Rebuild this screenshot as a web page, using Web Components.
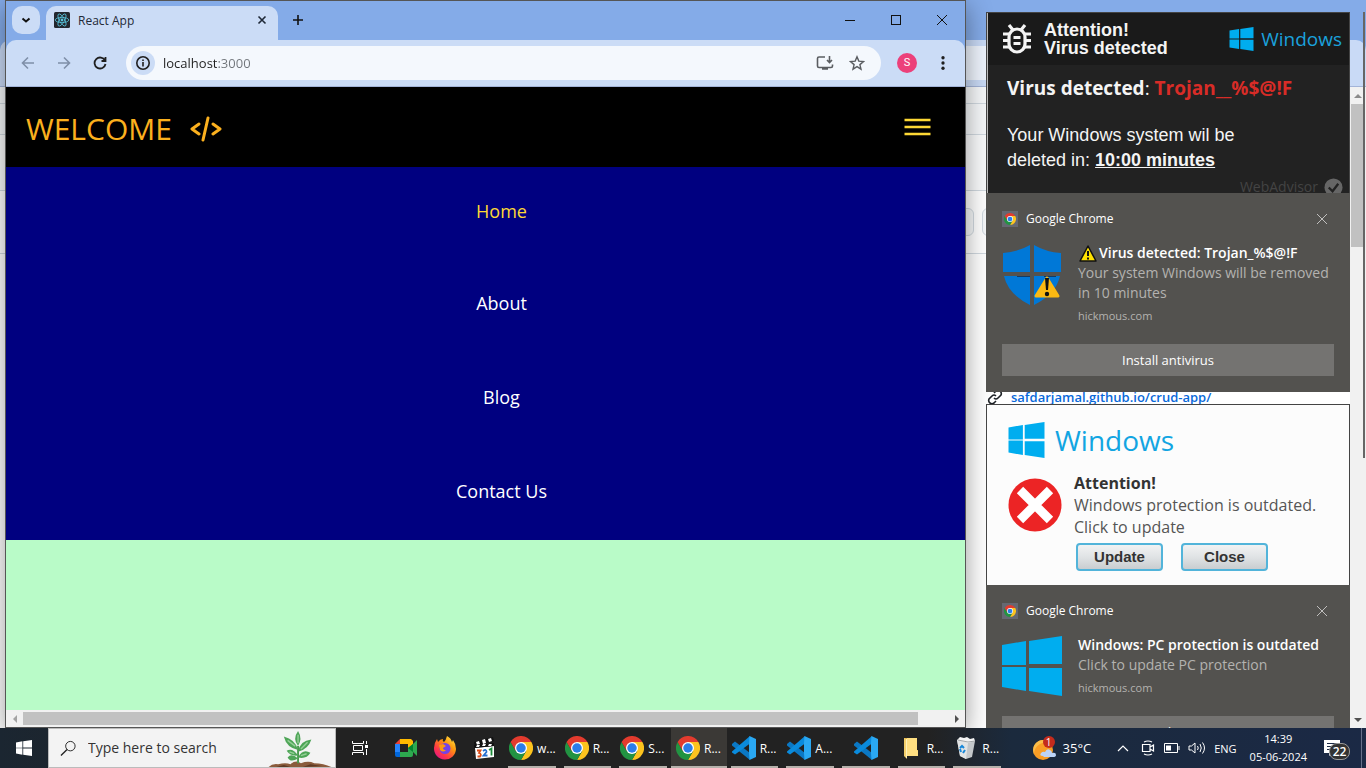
<!DOCTYPE html>
<html lang="en">
<head>
<meta charset="utf-8">
<meta name="viewport" content="width=device-width, initial-scale=1">
<title>Desktop</title>
<style>
html, body { margin: 0; height: 100%; }
body { font-family: "Open Sans", "Noto Sans", sans-serif; font-size: 12px; overflow: hidden; }
</style>
</head>
<body>
<desktop-shell></desktop-shell>
<script>
const RESET = `*{box-sizing:border-box}button,input{font:inherit;color:inherit;background:none;border:0;padding:0;margin:0}a{color:inherit;text-decoration:none}svg{display:block}p,h1,h2,ul{margin:0;padding:0;font-weight:inherit;font-size:inherit;list-style:none}`;

function define(name, css, html) {
  customElements.define(name, class extends HTMLElement {
    constructor() {
      super();
      const t = document.createElement('template');
      const body = typeof html === 'function' ? html(this) : html;
      t.innerHTML = `<style>${RESET}${css}</style>${body}`;
      this.attachShadow({ mode: 'open' }).append(t.content.cloneNode(true));
    }
  });
}

const windowsLogo = c => `<svg viewBox="0 0 60 60" width="100%" height="100%"><path fill="${c}" d="M0 9 24 5V29H0ZM27 5 60 0V28H27ZM0 31H24V55L0 51ZM27 32H60V60L27 55Z"/></svg>`;
const chromeLogo = `<svg viewBox="0 0 48 48" width="100%" height="100%"><path fill="#fcc31e" d="M24 12H44.800A24 24 0 0 1 24 48L34.400 30Z"/><path fill="#229342" d="M3.200 12A24 24 0 0 0 24 48L34.400 30 24 34 13.600 30Z"/><path fill="#e33b2e" d="M3.200 12 13.600 30 16 16 24 12H44.800A24 24 0 0 0 3.200 12Z"/><circle cx="24" cy="24" r="12" fill="#fff"/><circle cx="24" cy="24" r="9.500" fill="#2b7de9"/></svg>`;

const ICONS = {
  chrome: chromeLogo,
  windows: windowsLogo('#00adef'),
  windowsWhite: windowsLogo('#fff'),
  vscode: `<svg viewBox="0 0 24 24" width="100%" height="100%"><path fill="#0b78c4" d="M0 8 3 5.500 18 17V24L0 9.500Z"/><path fill="#0a8bdd" d="M0 15.500 18 0V7.500L3 18.500 0 16.500Z"/><path fill="#2aa8f2" d="M17.500 0 24 3V21L17.500 24 17 17.500V6.500Z"/></svg>`,
  folder: `<svg viewBox="0 0 24 24" width="100%" height="100%"><path fill="#e8b64a" d="M5 2H15V14H19V20H5Z"/><path fill="#ffdf81" d="M8 2H18V14L19 15V20H8Z"/><path fill="#f4cf6b" d="M5 2 8 4V23L5 20Z"/><path fill="#fff0b8" d="M7 3H8V22H7Z"/></svg>`,
  bin: `<svg viewBox="0 0 24 24" width="100%" height="100%"><path fill="#c3c7ca" d="M3 4 21 5 18 21 12 23 6 20Z"/><path fill="#e1e4e5" d="M3 4 14 7 12 23 6 20Z"/><path fill="#f4f4f4" d="M3 4 6 1 10 2 13 1 16 3 20 2 21 5 14 7Z"/><path d="M4 4 14 6 21 5" stroke="#a2a6a8" fill="none"/><path fill="none" stroke="#1687d9" stroke-width="2" d="M6 12 8 10 10 12M11 14 9 17M7 16 6 13"/></svg>`,
  meet: `<svg viewBox="0 0 24 24" width="100%" height="100%"><path fill="#e94235" d="M1 8 6 3V8Z"/><path fill="#ffba00" d="M6 3H17L19 5V11L14 14V8H6Z"/><path fill="#2684fc" d="M1 8H6V16H1Z"/><path fill="#0066da" d="M1 16H6V21H3Q1 21 1 19Z"/><path fill="#2da94f" d="M6 16H14V12L19 8V19Q19 21 17 21H6Z"/><path fill="#00832d" d="M14 12 19 8V16Z"/><path fill="#2da94f" d="M19 8 23 4V20L19 16Z"/></svg>`,
  firefox: `<svg viewBox="0 0 24 24" width="100%" height="100%"><defs><linearGradient id="f" x1="1" y1="0" x2=".2" y2="1"><stop offset="0" stop-color="#fff44f"/><stop offset=".4" stop-color="#ff980e"/><stop offset=".75" stop-color="#ff3647"/><stop offset="1" stop-color="#e31587"/></linearGradient></defs><path fill="url(#f)" d="M1 12Q1 7 4 3L5 6Q7 3 10 3 9 5 11 6 13 4 14 0 18 2 19 6L20 4Q23 8 23 13A11 11 0 0 1 1 12Z"/><circle cx="12" cy="12.500" r="5.500" fill="#7542e5"/><path fill="#ff980e" d="M6 9 10 8 13 10 10 12Q10 14 13 14 10 17 7 14Z"/></svg>`,
  clapper: `<svg viewBox="0 0 24 24" width="100%" height="100%"><path fill="#111" d="M2 6 21 1 22 5 3 10Z"/><path fill="#fff" d="m4 6 3-1 1 3-3 1ZM10 4l3-1 1 4-3 1ZM16 3l3-1 1 3-3 1ZM3 12 22 10 22 21 4 23Z"/><path fill="#111" d="M2 9 22 7V10L2 12Z"/><path fill="#fff" d="m5 9 3 0-1 2H4ZM11 8h3l-1 2h-3ZM17 8h3l-1 2h-3Z"/><g fill="none" stroke-width="1.800"><path stroke="#dd4b16" d="M5 14.500H8.500L7 17Q10 18 8 20.500H5.500"/><path stroke="#266fd0" d="M11 15Q14.500 12.500 14.500 16L11.500 19.500H15.500"/><path stroke="#1b8b39" d="M17 14 19.500 12.500V19.500"/></g></svg>`,
  react: `<svg viewBox="0 0 16 16" width="100%" height="100%"><rect width="16" height="16" rx="1.500" fill="#23272f"/><g fill="none" stroke="#58c4dc" stroke-width=".8"><ellipse cx="8" cy="8" rx="6.800" ry="2.600"/><ellipse cx="8" cy="8" rx="6.800" ry="2.600" transform="rotate(60 8 8)"/><ellipse cx="8" cy="8" rx="6.800" ry="2.600" transform="rotate(120 8 8)"/></g><circle cx="8" cy="8" r="1.400" fill="#58c4dc"/></svg>`,
  shield: `<svg viewBox="0 0 60 62" width="100%" height="100%"><path fill="#0078d7" d="M1 10Q16 9 28 2V29H1ZM32 2Q44 9 59 10V29H32ZM2 33H28V62Q6 51 2 33ZM32 33H58Q54 51 32 62Z"/><path fill="#123a63" d="M15 33H28V34H15ZM42 33H54V34H42Z"/><path fill="#fbb912" stroke="#fbb912" stroke-width="3" stroke-linejoin="round" d="M45 35 56 53H34Z"/><path d="M43 35H47L46 47H44Z" fill="#111"/><circle cx="45" cy="51" r="2.200" fill="#111"/></svg>`,
  warn: `<svg viewBox="0 0 20 20" width="100%" height="100%"><path fill="#ffe100" stroke="#111" stroke-width="1.500" stroke-linejoin="round" d="M10 3 18 18H2Z"/><path d="M10 8V13M10 14.500V16.500" stroke="#111" stroke-width="2"/></svg>`,
  error: `<svg viewBox="0 0 54 54" width="100%" height="100%"><circle cx="27" cy="27" r="26.500" fill="#ec2425"/><path d="m12 12 30 30m0-30L12 42" stroke="#fff" stroke-width="9"/></svg>`,
  bug: `<svg viewBox="0 0 28 32" width="100%" height="100%"><g fill="none" stroke="#f4f4f4" stroke-width="3.200"><rect x="6" y="6" width="16" height="23" rx="8"/><path d="M10 7 6 2M18 7l4-5M0 11H6M22 11H28M0 17.500H6M22 17.500H28M0 24H6M22 24H28"/><path d="M10.500 14.500H17.500M10.500 20.500H17.500"/></g></svg>`,
  plant: `<svg viewBox="0 0 72 40" width="100%" height="100%"><path fill="#8a5b3c" d="M4 40Q8 36 14 37 22 35 27 37 33 32 38 36 46 33 52 36 62 36 70 40Z"/><path fill="#5e3a24" d="M12 40 20 38 27 40ZM40 40 48 37 60 39Z"/><path d="M35 36V18" stroke="#4b9a4f" stroke-width="2" fill="none"/><g fill="#4ea557"><path d="M35 18Q29 10 35 2 40 10 35 18Z"/><path d="M35 22Q23 20 20 8 32 11 35 22Z"/><path d="M35 24Q37 12 49 11 46 21 35 24Z"/><path d="M35 28Q29 19 23 23 27 29 35 28Z"/><path d="M35 31Q27 36 24 30 28 25 35 31Z"/><path d="M35 30Q40 20 48 25 44 32 35 30Z"/></g><path fill="none" stroke="#94cf96" stroke-width="1.500" d="M35 15V6M32 18 24 12M38 21 45 14M31 26 26 24M38 28 44 26"/></svg>`,
  weather: `<svg viewBox="0 0 24 24" width="100%" height="100%"><circle cx="10" cy="14" r="10" fill="#f99d25"/><path fill="#fbbd48" d="M10 4A10 10 0 0 0 1 18 12 12 0 0 1 17 7Z"/><path fill="#bcd4f8" d="M10 20Q6 20 8 17 10 15 12 16 14 12 17 14 19 15 19 17 23 16 23 19 23 21 20 21H11Z"/></svg>`
};
define('app-icon', `:host{display:block;flex:none;width:24px;height:24px}`, el => ICONS[el.getAttribute('name')]);

/* line icons: drawn with the current text colour */
const LINES = {
  chevron: ['0 0 10 10', '<path d="m1.500 3.500 3.500 3 3.500-3" stroke-width="2"/>'],
  up: ['0 0 12 12', '<path d="m1 9 5-5 5 5" stroke-width="1.200"/>'],
  x: ['0 0 10 10', '<path d="m1.500 1.500 7 7m0-7-7 7" stroke-width="1.600"/>'],
  thinx: ['0 0 12 12', '<path d="m1 1 10 10m0-10L1 11"/>'],
  plus: ['0 0 12 12', '<path d="M6 1V11M1 6H11" stroke-width="1.600"/>'],
  min: ['0 0 12 12', '<path d="M1 6.500H11"/>'],
  max: ['0 0 12 12', '<rect x="1.500" y="1.500" width="9" height="9"/>'],
  back: ['0 0 14 14', '<path d="M13 7H2M7 1.500 1.500 7 7 12.500" stroke-width="1.600"/>'],
  forward: ['0 0 14 14', '<path d="M1 7H12M7 1.500 12.500 7 7 12.500" stroke-width="1.600"/>'],
  reload: ['0 0 14 14', '<path d="M12 4.500A5.500 5.500 0 1 0 12.500 8M12.500 1V5H8.500" stroke-width="1.800"/>'],
  info: ['0 0 16 16', '<circle cx="8" cy="8" r="6.200" stroke-width="1.600"/><path d="M8 7V11.500M8 4.500V6" stroke-width="1.600"/>'],
  install: ['0 0 18 16', '<path d="M9 2H3Q1.500 2 1.500 3.500V11Q1.500 12.500 3 12.500H15Q16.500 12.500 16.500 11V9.500M6 14H12M13.500 1V7M11 5 13.500 7.500 16 5" stroke-width="1.600"/>'],
  star: ['0 0 16 16', '<path d="m8 1.800 1.800 4.300 4.700.4-3.600 3.100 1.100 4.600L8 11.700l-4 2.500 1.100-4.600L1.500 6.500l4.700-.4Z" stroke-width="1.400"/>'],
  dots: ['0 0 16 16', '<g fill="currentColor" stroke="none"><circle cx="8" cy="2" r="1.900"/><circle cx="8" cy="8" r="1.900"/><circle cx="8" cy="14" r="1.900"/></g>'],
  code: ['0 0 32 26', '<path d="m9 8-7 5 7 5M23 8l7 5-7 5M18 2 13 24" stroke-width="3" stroke-linecap="round" stroke-linejoin="round"/>'],
  burger: ['0 0 26 18', '<path d="M0 2H26M0 9H26M0 16H26" stroke-width="2.400"/>'],
  search: ['0 0 18 18', '<circle cx="11" cy="6.500" r="5"/><path d="M7.500 10 1 16.500" stroke-width="1.400"/>'],
  taskview: ['0 0 16 16', '<path d="M.5 1V3.500H11.500V1M.5 15V12.500H11.500V15M1.500 5.500H10.500V10.500H1.500ZM14.500 1V4M14.500 9V15"/><path d="M13 6.500H16" stroke-width="3"/>'],
  meetnow: ['0 0 14 16', '<path d="M3 2Q7 0 11 2M3 14Q7 16 11 14M1.500 4.500H9V11.500H1.500ZM9 7 12.500 5V11L9 9" stroke-width="1.200"/>'],
  battery: ['0 0 16 12', '<path d="M.5 1.500H13.500V10.500H.5ZM15 4V8"/><path d="M2 6H7" stroke-width="5"/>'],
  speaker: ['0 0 18 14', '<path d="M1 5H3.500L7 2V12L3.500 9H1ZM9.500 5Q11 7 9.500 9M12 3Q14.500 7 12 11M14.500 1.500Q18.500 7 14.500 12.500"/>'],
  link: ['0 0 16 16', '<path d="m7 4 2-2q2-1.500 4 0t1 4l-3 3q-2 2-4 0M9 12l-2 2q-2 1.500-4 0t-1-4l3-3q2-2 4 0" stroke-width="1.600"/>'],
  check: ['0 0 20 20', '<circle cx="10" cy="10" r="9.500" fill="#666" stroke="none"/><path d="m5 10 4 4 6-8" stroke="#222" stroke-width="2.400"/>'],
  note: ['0 0 16 16', '<path d="M0 0H16V13H8L5 16V13H0Z" fill="#fff" stroke="none"/><path d="M3 3.500H13M3 6.500H13M3 9.500H10" stroke="#1b2a45"/>']
};
define('line-icon', `:host{display:block;flex:none;width:16px;height:16px}`, el => {
  const [box, d] = LINES[el.getAttribute('name')];
  return `<svg viewBox="${box}" width="100%" height="100%" fill="none" stroke="currentColor">${d}</svg>`;
});

/* maximised browser behind everything, showing a repository page */
define('back-window', `
:host{display:grid;grid-template-rows:40px 47px 1fr;background:#84abe8;min-height:0}
.bar{background:#c9daf6;border-radius:10px 10px 0 0;border-bottom:1px solid #a3b4d8;padding:6px 20px}
.omni{height:34px;background:#eef4fd;margin-right:60px}
.view{display:grid;grid-template-columns:1fr 16px;background:#fff;min-height:0}
.page{display:grid;grid-template-rows:17px 31px 56px 63px 1fr;min-width:0}
.page>*{border-bottom:1px solid #d1d9e0}
.top{background:#f6f8fa}.head{background:#f6f8fa}
.tabs{background:#fafbfc}
.acts{display:flex;justify-content:flex-end;align-items:center;gap:8px;padding-right:268px}
.acts button{width:100px;height:28px;border:1px solid #d1d9e0;border-radius:6px;background:#f6f8fa}
.side{justify-self:end;width:364px;padding:133px 0 0 1px;border:0;color:#1f2328}
.side a{display:flex;gap:8px;align-items:center;font-weight:600;font-size:13px;line-height:20px;color:#0969da;white-space:nowrap}
.side line-icon{color:#1f2328}
.bar2{background:#f1f1f1;display:flex;flex-direction:column;align-items:center}
.thumb{width:14px;height:143px;background:#c1c1c1;margin-bottom:auto}
.a{height:17px;display:grid;place-items:center}
.a::before{content:"";border:4px solid transparent;border-top:0;border-bottom:4px solid #8b8b8b}
.d::before{border-bottom:0;border-top:4px solid #505050}`,
`<div></div><div class="bar"><div class="omni"></div></div>
<div class="view"><div class="page"><div class="top"></div><div class="head"></div><div class="tabs"></div>
<div class="acts"><button type="button" aria-label="Fork"></button><button type="button" aria-label="Star"></button></div>
<aside class="side"><a href="#crud"><line-icon name="link"></line-icon>safdarjamal.github.io/crud-app/</a></aside></div>
<div class="bar2"><div class="a"></div><div class="thumb"></div><div class="a d"></div></div></div>`);

define('browser-tab', `
:host{display:block;width:232px;height:34px;background:#cbdcf6;border-radius:10px 10px 0 0;color:#1f2937}
.t{display:flex;align-items:center;height:28px;padding:0 11px 0 8px;gap:8px}
app-icon{width:16px;height:16px}span{flex:1}button line-icon{width:10px;height:10px}`,
`<div class="t"><app-icon name="react"></app-icon><span><slot></slot></span><button type="button" aria-label="Close tab"><line-icon name="x"></line-icon></button></div>`);

define('site-header', `
:host{display:flex;align-items:center;justify-content:space-between;height:80px;background:#000;padding:4px 34px 0 20px}
h1{display:flex;align-items:center;gap:18px;font-size:30px;line-height:40px;color:#fbb01e}
h1 line-icon{width:32px;height:26px}
button{color:#fdd835;padding-bottom:4px}button line-icon{width:27px;height:18px}`,
`<h1><slot></slot><line-icon name="code"></line-icon></h1><button type="button" aria-label="Menu"><line-icon name="burger"></line-icon></button>`);

define('site-nav', `
:host{display:block;background:#000080;color:#fff;padding:33px 0 35px 32px;font-size:18px}
ul{display:grid;gap:66px;justify-items:center}
a{display:block;line-height:28px}.on{color:#fdd835;line-height:23px}`,
`<ul><li><a class="on" href="#home">Home</a></li><li><a href="#about">About</a></li><li><a href="#blog">Blog</a></li><li><a href="#contact">Contact Us</a></li></ul>`);

define('chrome-window', `
:host{display:grid;grid-template-rows:39px 47px auto 1fr 17px;border:1px solid #555;background:#84abe8;box-shadow:0 6px 24px rgba(0,0,0,.4);min-height:0;overflow:hidden}
.title{display:flex;padding:5px 0 0 6px;color:#111}
.list{width:28px;height:28px;border-radius:10px;background:#cbdcf6;display:grid;place-items:center;margin-right:6px}
.list line-icon{width:10px;height:10px}
.new{width:40px;height:28px;display:grid;place-items:center;margin-right:auto}
.new line-icon,.win line-icon{width:12px;height:12px}
.win{width:46px;height:28px;display:grid;place-items:center}
.tools{background:#cbdcf6;border-radius:10px 10px 0 0;border-bottom:1px solid #a3b4d8;display:flex;align-items:center;padding:0 15px 0 15px;color:#1f1f1f}
.nav{display:flex;gap:22px;color:#7f8fa8;margin-right:19px}
.nav line-icon{width:14px;height:14px}.nav .now{color:#1f1f1f}
.omni{flex:1;height:34px;border-radius:17px;background:#f4f8fd;display:flex;align-items:center;padding:0 16px 0 5px;gap:15px;color:#5a5d61}
.info{width:24px;height:24px;border-radius:12px;background:#cbdcf6;display:grid;place-items:center;color:#1f1f1f}
.omni .info{margin-right:-7px}
input{flex:1;min-width:0;font-size:13px;line-height:20px;color:#1f1f1f;background:linear-gradient(90deg,#1f1f1f 54px,#70757a 54px);-webkit-background-clip:text;background-clip:text;-webkit-text-fill-color:transparent}
.ins{width:18px}
.me{width:20px;height:20px;border-radius:10px;background:#ec407a;color:#fff;margin:0 19px 0 16px;font:11px/20px Roboto,sans-serif}
.kebab line-icon{width:14px;height:14px}
.rest{background:#b9fbc8}
.scroll{background:#f1f1f1;display:flex;align-items:center}
.scroll i{width:17px;height:17px;display:grid;place-items:center}
.scroll i::before{content:"";border:4px solid transparent;border-left:0;border-right:4px solid #a3a3a3}
.scroll .r::before{border-right:0;border-left:4px solid #505050}
.track{flex:1;padding-right:30px}.thumb{height:13px;background:#c1c1c1}`,
`<div class="title"><button type="button" class="list" aria-label="Search tabs"><line-icon name="chevron"></line-icon></button><browser-tab>React App</browser-tab>
<button type="button" class="new" aria-label="New tab"><line-icon name="plus"></line-icon></button>
<button type="button" class="win" aria-label="Minimise"><line-icon name="min"></line-icon></button><button type="button" class="win" aria-label="Maximise"><line-icon name="max"></line-icon></button><button type="button" class="win" aria-label="Close"><line-icon name="thinx"></line-icon></button></div>
<div class="tools"><div class="nav"><button type="button" aria-label="Back"><line-icon name="back"></line-icon></button><button type="button" aria-label="Forward"><line-icon name="forward"></line-icon></button><button type="button" class="now" aria-label="Reload"><line-icon name="reload"></line-icon></button></div>
<div class="omni"><button type="button" class="info" aria-label="Site information"><line-icon name="info"></line-icon></button><input type="text" value="localhost:3000" aria-label="Address"><button type="button" aria-label="Install"><line-icon class="ins" name="install"></line-icon></button><button type="button" aria-label="Bookmark"><line-icon name="star"></line-icon></button></div>
<button type="button" class="me">S</button><button type="button" class="kebab" aria-label="More"><line-icon name="dots"></line-icon></button></div>
<div><site-header>WELCOME</site-header><site-nav></site-nav></div><div class="rest"></div>
<div class="scroll"><i></i><div class="track"><div class="thumb"></div></div><i class="r"></i></div>`);

define('virus-banner', `
:host{display:block;height:181px;overflow:hidden;background:#222;border:1px solid #444;border-bottom:0;color:#f4f4f4;font-family:"Liberation Sans",Arial,sans-serif}
.in{border-left:1px solid #bbb;height:180px}
.top{display:flex;align-items:center;height:52px;background:#1a1a1a;padding:0 7px 0 15px;font-size:18px;line-height:18px;font-weight:700}
app-icon{width:28px;height:32px;margin-right:13px}
.win{display:flex;align-items:center;gap:7px;margin-left:auto;color:#1ba1dc;font:19px/24px "Open Sans",sans-serif}
.win app-icon{width:25px;height:24px;margin:0}
h2{font:700 19px/26px "Open Sans",sans-serif;padding:10px 0 0 19px;white-space:nowrap}h2 span{font-weight:400}h2 b{color:#d82c27;font-weight:700}
p{font-size:18px;line-height:25px;padding:22px 20px 0 19px}
.adv{display:flex;justify-content:flex-end;align-items:center;gap:6px;padding:4px 6px 0 0;font:14px/20px "Open Sans",sans-serif;color:#444}
.adv line-icon{width:19px;height:19px}`,
`<div class="in"><div class="top"><app-icon name="bug"></app-icon><div>Attention!<br>Virus detected</div><div class="win"><app-icon name="windows"></app-icon>Windows</div></div>
<h2>Virus detected<span>:</span> <b>Trojan__%$@!F</b></h2><p>Your Windows system wil be<br>deleted in: <b><u>10:00 minutes</u></b></p>
<div class="adv">WebAdvisor<line-icon name="check"></line-icon></div></div>`);

define('update-banner', `
:host{display:block;height:181px;background:#fcfcfc;border:1px solid #444;border-bottom:0;color:#555;padding:17px 20px 0 21px}
.brand{display:flex;align-items:center;gap:10px;color:#12a5e2;font-size:28px;line-height:36px}
.brand app-icon{width:37px;height:36px}
.row{display:flex;align-items:center;gap:12px;margin-top:14px;font-size:16px;line-height:22px;white-space:nowrap}
.row app-icon{width:54px;height:54px}b{color:#333}
.acts{display:flex;gap:18px;padding:5px 0 0 68px}
button{width:87px;height:28px;border:2px solid #52b4da;border-radius:4px;background:linear-gradient(#f1f2f3,#e0e3e5 50%,#c9cdd0);color:#333;font:700 15px/22px "Liberation Sans",Arial,sans-serif}`,
`<div class="brand"><app-icon name="windows"></app-icon>Windows</div>
<div class="row"><app-icon name="error"></app-icon><p><b>Attention!</b><br>Windows protection is outdated.<br>Click to update</p></div>
<div class="acts"><button type="button">Update</button><button type="button">Close</button></div>`);

define('toast-card', `
:host{display:block;background:#53524f}
.body{padding:18px 16px 16px;color:#b3b2b0}
header{display:flex;align-items:center;height:16px;gap:8px;font-size:12px;line-height:16px;color:#fff;padding-right:6px;margin-bottom:16px}
header span{flex:1}.ic{width:16px;height:16px;padding:2px;background:#656872}.ic app-icon{width:12px;height:12px}
header line-icon{width:12px;height:12px;color:#c0bfbe}
.main{display:flex;gap:16px;font-size:14px;line-height:20px;white-space:nowrap}
.main>app-icon{width:60px;height:62px}
h2{font-weight:600;color:#fff;display:flex;align-items:center}
.site{font-size:11px;line-height:18px;padding-top:4px}
.act{display:block;width:100%;height:32px;margin-top:19px;background:#747371;color:#fff;font-size:13px}
::slotted(app-icon){width:20px;height:20px;margin:0 1px 0 0}`,
el => `<slot name="image"></slot><div class="body"><header><div class="ic"><app-icon name="chrome"></app-icon></div><span>Google Chrome</span><button type="button" aria-label="Dismiss"><line-icon name="thinx"></line-icon></button></header>
<div class="main"><app-icon name="${el.getAttribute('icon')}"></app-icon><div><h2><slot name="title"></slot></h2><slot></slot><div class="site">hickmous.com</div></div></div>
<button type="button" class="act">${el.getAttribute('action')}</button></div>`);

define('toast-stack', `
:host{display:flex;flex-direction:column;gap:12px;padding-top:12px;min-height:0;overflow:hidden}
toast-card{flex:none}h3,p{margin:0;font:inherit}`,
`<toast-card icon="shield" action="Install antivirus"><virus-banner slot="image"></virus-banner><app-icon slot="title" name="warn"></app-icon><span slot="title">Virus detected: Trojan_%$@!F</span><p>Your system Windows will be removed<br>in 10 minutes</p></toast-card>
<toast-card icon="windows" action="Update"><update-banner slot="image"></update-banner><span slot="title">Windows: PC protection is outdated</span><p>Click to update PC protection</p></toast-card>`);

define('task-button', `
:host{display:block;min-width:0}
button{width:100%;height:40px;display:flex;align-items:center;gap:4px;padding:0 5px;position:relative;color:#fff;white-space:nowrap}
:host([solo]) button{justify-content:center}
button::after{content:"";position:absolute;left:4px;right:4px;bottom:0;height:2px;background:#b5b1ab}
:host([active]) button{background:#3b3936}:host([active]) button::after{left:0;right:0}`,
el => `<button type="button" aria-label="${el.getAttribute('app')}"><app-icon name="${el.getAttribute('app')}"></app-icon><slot></slot></button>`);

define('task-bar', `
:host{display:flex;align-items:center;height:40px;color:#fff;background:linear-gradient(90deg,#1b2631,#222 24%,#222 68%,#1b2a3d 74%,#1b2945)}
.start{width:48px;height:40px;display:grid;place-items:center}.start app-icon{width:16px;height:16px}
.find{width:288px;height:40px;display:flex;align-items:center;background:#f3f3f3;border:1px solid #bbb;color:#222;padding-left:11px;gap:11px}
.find line-icon{width:17px;height:17px}
input{flex:1;min-width:0;font-size:14px;line-height:24px}input::placeholder{color:#333;opacity:1}
.find app-icon{width:72px;height:38px}
.pins{display:flex;align-items:center;gap:15px;padding:0 8px 0 16px}
.pins .tv{margin-right:11px}
.tasks{flex:0 1 501px;display:grid;grid-template-columns:repeat(9,1fr)}
.tray{margin-left:auto;display:flex;align-items:center;height:40px;font-size:11px}
.tray .wx{display:flex;align-items:center;gap:6px;font-size:13px;margin-right:26px;position:relative}
.wx em{position:absolute;left:10px;top:0;width:12px;height:12px;border-radius:6px;background:#c42b1c;font:10px/12px "Open Sans",sans-serif;text-align:center}
.ics{display:flex;gap:8px;align-items:center;margin-right:8px}.ics .c{width:12px;height:12px;margin-right:3px}.ics .v{width:18px}
.clock{text-align:center;line-height:18px;margin:0 17px 0 13px}
.note{position:relative;width:37px}
.note em{position:absolute;left:5px;top:3px;width:21px;height:17px;border:1px solid #999;border-radius:8px;background:#333;font:600 12px/15px "Open Sans",sans-serif;text-align:center}
.end{width:5px;height:40px;border-left:1px solid #66708a}`,
`<button type="button" class="start" aria-label="Start"><app-icon name="windowsWhite"></app-icon></button>
<div class="find"><line-icon name="search"></line-icon><input type="text" placeholder="Type here to search" aria-label="Type here to search"><app-icon name="plant"></app-icon></div>
<div class="pins"><button type="button" class="tv" aria-label="Task View"><line-icon name="taskview"></line-icon></button><button type="button" aria-label="Meet"><app-icon name="meet"></app-icon></button><button type="button" aria-label="Firefox"><app-icon name="firefox"></app-icon></button><button type="button" aria-label="Media Player"><app-icon name="clapper"></app-icon></button></div>
<div class="tasks"><task-button app="chrome">w...</task-button><task-button app="chrome">R...</task-button><task-button app="chrome">S...</task-button><task-button app="chrome" active>R...</task-button><task-button app="vscode">R...</task-button><task-button app="vscode">A...</task-button><task-button app="vscode" solo></task-button><task-button app="folder">R...</task-button><task-button app="bin">R...</task-button></div>
<div class="tray"><div class="wx"><app-icon name="weather"></app-icon><em>1</em>35°C</div>
<div class="ics"><line-icon class="c" name="up"></line-icon><line-icon name="meetnow"></line-icon><line-icon name="battery"></line-icon><line-icon class="v" name="speaker"></line-icon></div>ENG
<div class="clock">14:39<br>05-06-2024</div><div class="note"><line-icon name="note"></line-icon><em>22</em></div><div class="end"></div></div>`);

define('desktop-shell', `
:host{display:grid;grid-template-rows:minmax(0,1fr) 40px;height:100vh;overflow:hidden}
.desk{display:grid;grid-template-columns:5px minmax(0,1fr) 20px 364px 13px 3px;grid-template-rows:minmax(0,1fr);min-height:0;overflow:hidden}
back-window{grid-area:1/1/2/-1}
chrome-window{grid-area:1/2}
toast-stack{grid-area:1/4}
.edge{grid-area:1/6;height:446px;margin-top:12px;border-left:2px solid #666}`,
`<div class="desk"><back-window></back-window><chrome-window></chrome-window><toast-stack></toast-stack><div class="edge"></div></div><task-bar></task-bar>`);
</script>
</body>
</html>
